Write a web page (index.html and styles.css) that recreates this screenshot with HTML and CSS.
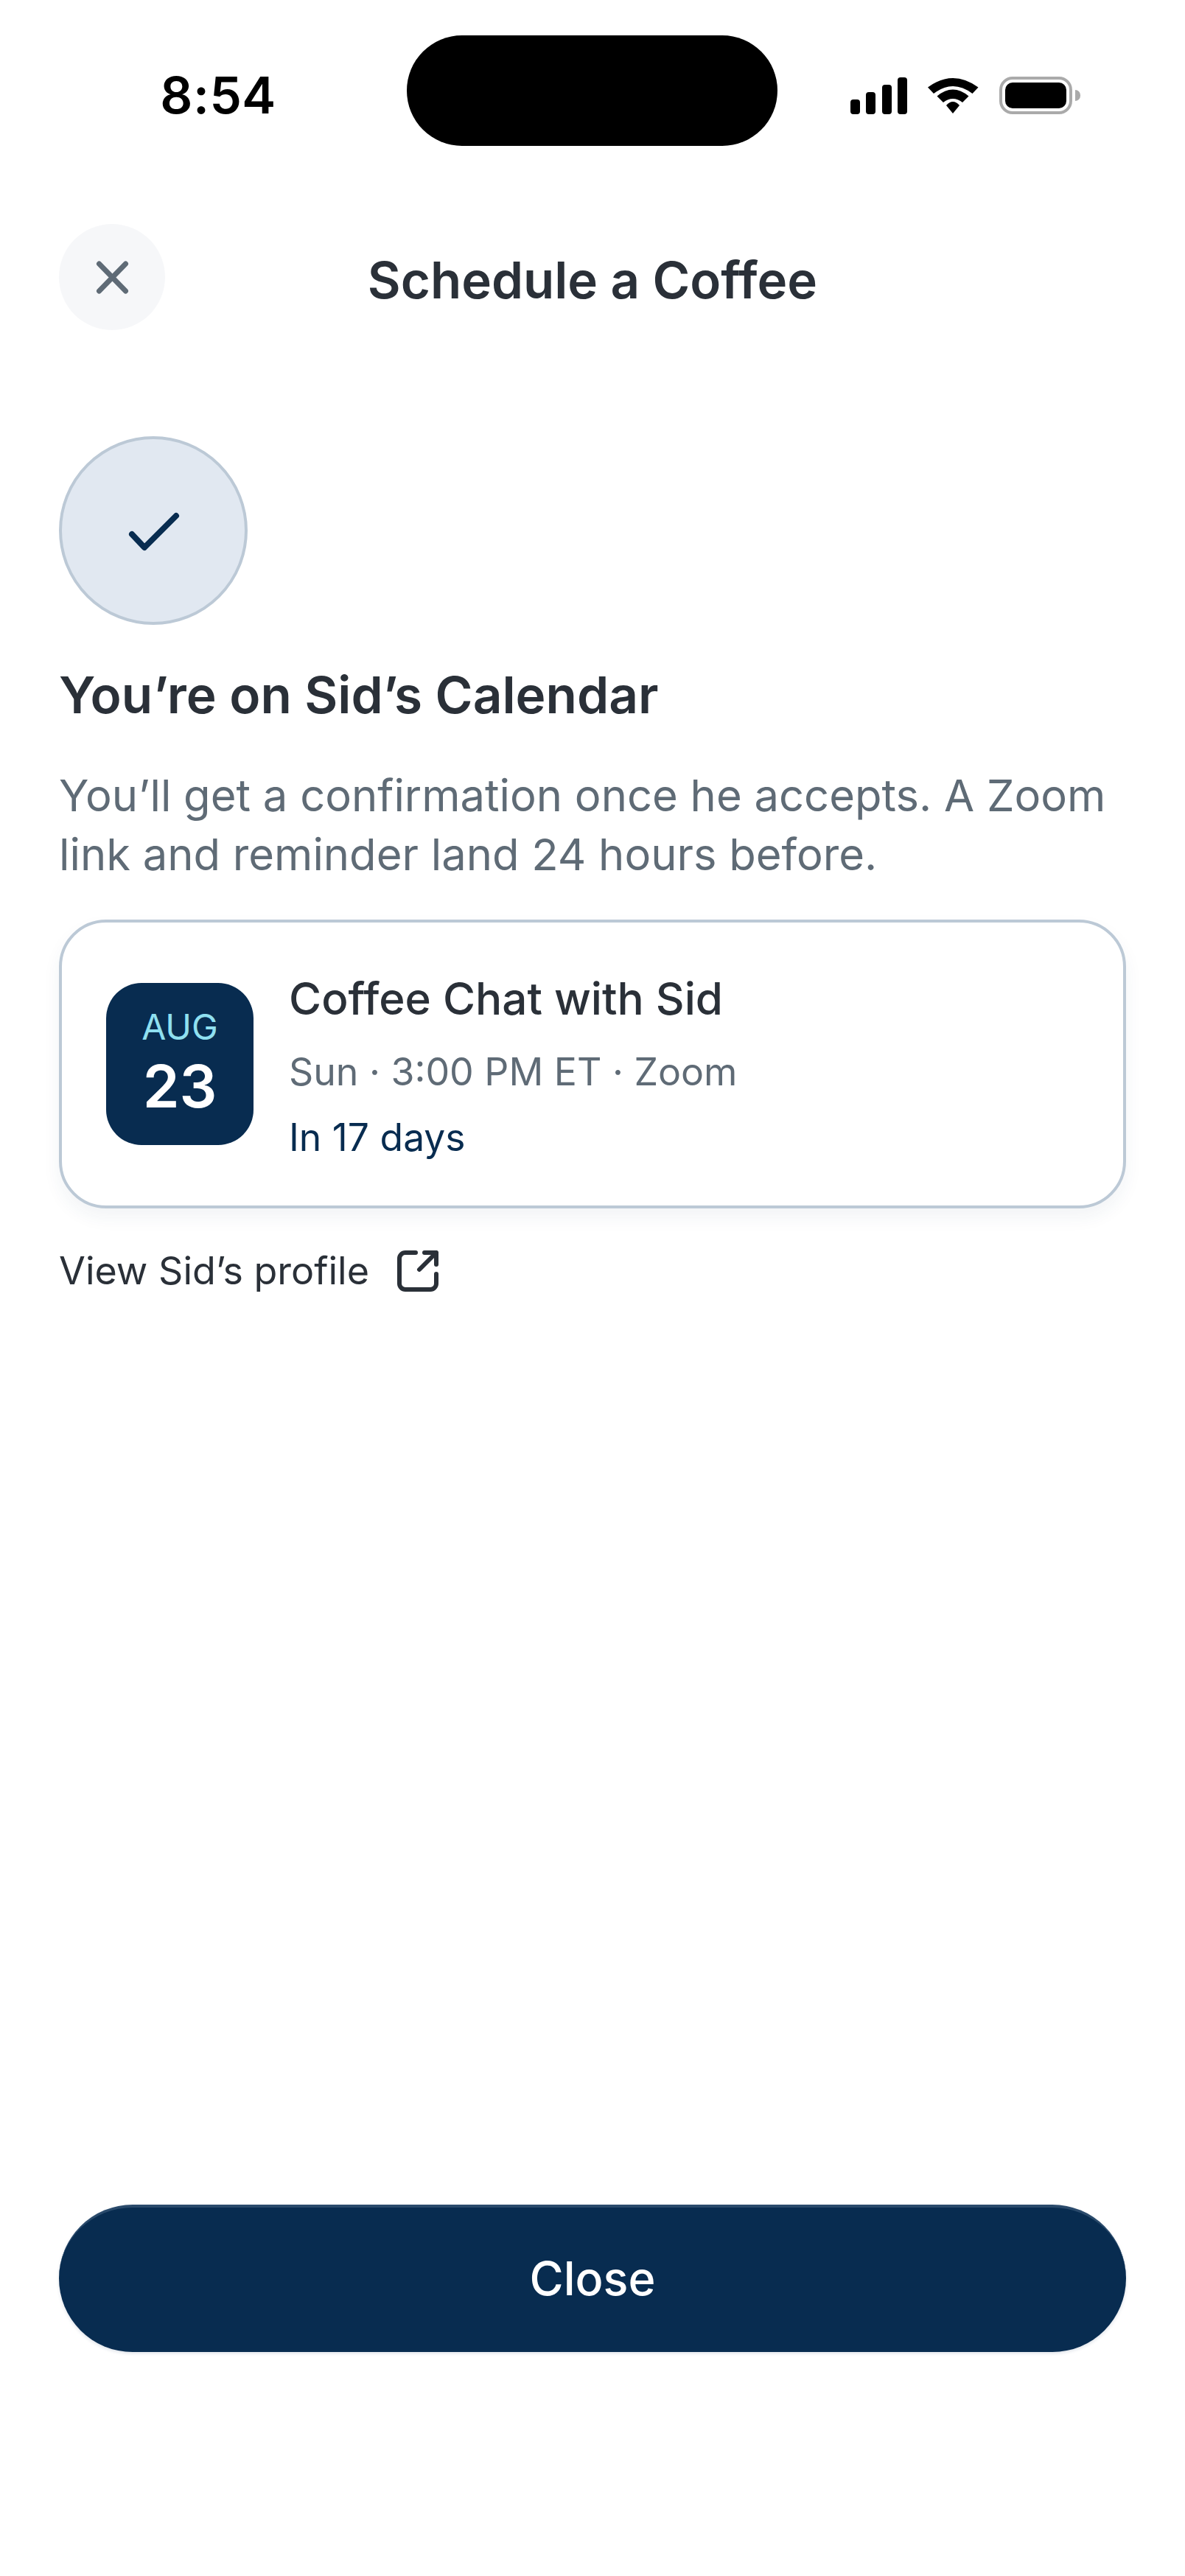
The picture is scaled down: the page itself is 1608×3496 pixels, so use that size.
FILE: index.html
```html
<!DOCTYPE html>
<html>
<head>
    <title>Schedule a Coffee</title>
    <link rel="stylesheet" href="styles.css">
</head>
<body>
    <div class="screen">
        <div class="status-bar">
            <div class="time">8:54</div>
            <div class="island"></div>
            <div class="status-icons">
                <svg class="signal" width="78" height="50" viewBox="0 0 78 50">
                    <rect x="0" y="30" width="13" height="20" rx="4"/>
                    <rect x="21" y="20" width="13" height="30" rx="4"/>
                    <rect x="43" y="10" width="13" height="40" rx="4"/>
                    <rect x="64" y="0" width="13" height="50" rx="4"/>
                </svg>
                <svg class="wifi" width="70" height="50" viewBox="0 0 70 50">
                    <path d="M0 13.5 Q34 -11.5 68.5 13.5 L60.5 22 Q34 2 8 22 Z"/>
                    <path d="M12.5 25.5 Q34 7.5 55.5 25.5 L47 34 Q34 24 21 34 Z"/>
                    <path d="M25 38 Q34 28 43 38 L34 49 Z"/>
                </svg>
                <div class="battery">
                    <div class="battery-fill"></div>
                </div>
                <div class="battery-cap"></div>
            </div>
        </div>

        <div class="nav">
            <button class="close-btn">
                <svg width="48" height="48" viewBox="0 0 48 48">
                    <path d="M6.5 6 L42.5 43 M42.5 6 L6.5 43" stroke="#5f6b76" stroke-width="7" stroke-linecap="round" fill="none"/>
                </svg>
            </button>
            <div class="nav-title">Schedule a Coffee</div>
        </div>

        <div class="content">
            <div class="check-circle">
                <svg width="72" height="56" viewBox="0 0 72 56">
                    <path d="M7 33 L24 51 L67 8" stroke="#082c50" stroke-width="8" stroke-linecap="round" stroke-linejoin="round" fill="none"/>
                </svg>
            </div>
            <h1>You’re on Sid’s Calendar</h1>
            <p class="lead">You’ll get a confirmation once he accepts. A Zoom link and reminder land 24 hours before.</p>

            <div class="card">
                <div class="date-badge">
                    <div class="month">AUG</div>
                    <div class="day">23</div>
                </div>
                <div class="details">
                    <div class="event-title">Coffee Chat with Sid</div>
                    <div class="event-meta">Sun · 3:00 PM ET · Zoom</div>
                    <div class="event-when">In 17 days</div>
                </div>
            </div>

            <a class="profile-link" href="#">
                <span>View Sid’s profile</span>
                <svg width="56" height="56" viewBox="0 0 56 56">
                    <path d="M25 3 H11 A8 8 0 0 0 3 11 V45 A8 8 0 0 0 11 53 H45 A8 8 0 0 0 53 45 V32 M37 3 H53 V19 M53 3 L30 26" stroke="#2a3038" stroke-width="6" stroke-linecap="round" stroke-linejoin="round" fill="none"/>
                </svg>
            </a>
        </div>

        <div class="footer">
            <button class="primary-btn">Close</button>
        </div>
    </div>
</body>
</html>
```

FILE: styles.css
```css
* {
    box-sizing: border-box;
}

body {
    margin: 0;
    background-color: #ffffff;
    font-family: Inter, "Noto Sans", sans-serif;
    color: #2a3038;
}

.screen {
    width: 1608px;
    height: 3496px;
    display: flex;
    flex-direction: column;
}

.status-bar {
    height: 303px;
    padding-top: 48px;
    display: flex;
    align-items: flex-start;
}

.time {
    width: 552px;
    padding-top: 46px;
    padding-left: 40px;
    text-align: center;
    font-size: 69px;
    line-height: 70px;
    font-weight: 600;
    letter-spacing: 0.5px;
    color: #000000;
}

.island {
    width: 503px;
    height: 150px;
    border-radius: 75px;
    background-color: #000000;
}

.status-icons {
    display: flex;
    align-items: center;
    padding-left: 99px;
    padding-top: 56px;
}

.wifi {
    margin-left: 27px;
}

.battery {
    width: 99px;
    height: 51px;
    margin-left: 27px;
    padding: 4px;
    border: 4px solid #aaaaaa;
    border-radius: 18px;
}

.battery-fill {
    width: 100%;
    height: 100%;
    border-radius: 10px;
    background-color: #000000;
}

.battery-cap {
    width: 7px;
    height: 15px;
    margin-left: 4px;
    border-radius: 0 8px 8px 0;
    background-color: #aaaaaa;
}

.nav {
    height: 145px;
    padding: 0 80px;
    display: flex;
    align-items: center;
    position: relative;
}

.close-btn {
    width: 144px;
    height: 144px;
    padding: 0;
    border: none;
    border-radius: 50%;
    background-color: #f6f7f9;
    display: flex;
    align-items: center;
    justify-content: center;
}

.nav-title {
    position: absolute;
    left: 0;
    right: 0;
    padding-top: 8px;
    text-align: center;
    font-size: 69px;
    font-weight: 600;
}

.content {
    flex: 1;
    padding: 144px 80px 0;
}

.check-circle {
    width: 256px;
    height: 256px;
    border-radius: 50%;
    background-color: #e1e8f1;
    border: 4px solid #bcc9d6;
    display: flex;
    align-items: center;
    justify-content: center;
}

h1 {
    margin: 53px 0 0;
    font-size: 69.3px;
    line-height: 84px;
    font-weight: 600;
}

.lead {
    margin: 54px 0 0;
    font-size: 59.7px;
    line-height: 80px;
    color: #5f6b76;
}

.card {
    margin-top: 49px;
    height: 392px;
    padding: 0 60px;
    display: flex;
    align-items: center;
    gap: 48px;
    background-color: #ffffff;
    border: 4px solid #bcc9d6;
    border-radius: 64px;
    box-shadow: 0 12px 24px rgba(40, 70, 110, 0.06);
}

.date-badge {
    width: 200px;
    height: 220px;
    border-radius: 48px;
    background-color: #082c50;
    display: flex;
    flex-direction: column;
    align-items: center;
    justify-content: center;
}

.month {
    padding-bottom: 4px;
    font-size: 48px;
    line-height: 56px;
    color: #8fe0f0;
}

.day {
    font-size: 80px;
    line-height: 96px;
    font-weight: 600;
    color: #ffffff;
}

.details {
    padding-top: 6px;
}

.event-title {
    font-size: 60.2px;
    line-height: 76px;
    font-weight: 500;
}

.event-meta {
    margin-top: 26px;
    font-size: 51.8px;
    line-height: 68px;
    color: #5f6b76;
}

.event-when {
    margin-top: 21px;
    font-size: 51.6px;
    line-height: 68px;
    color: #082c50;
}

.profile-link {
    margin-top: 53px;
    display: flex;
    align-items: center;
    gap: 38px;
    font-size: 52px;
    color: #2a3038;
    text-decoration: none;
}

.footer {
    padding: 0 80px 304px;
}

.primary-btn {
    width: 100%;
    height: 200px;
    padding: 0 0 4px;
    border: none;
    border-top: 4px solid #2a4a6b;
    border-radius: 100px;
    background-color: #082c50;
    box-shadow: 0 2px 4px rgba(40, 70, 110, 0.15);
    color: #ffffff;
    font-family: Inter, "Noto Sans", sans-serif;
    font-size: 63px;
    font-weight: 500;
}
```
